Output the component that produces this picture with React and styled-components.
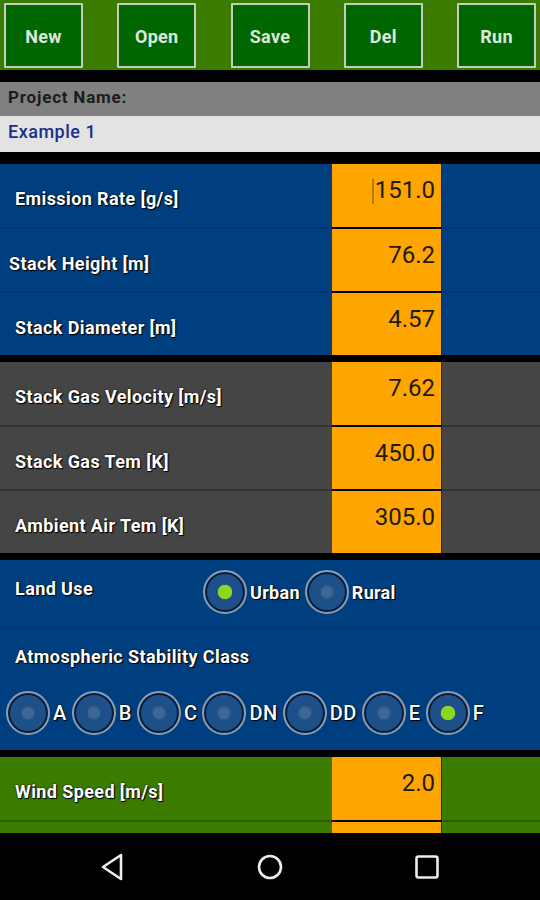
import React from "react";
import styled, { createGlobalStyle, css } from "styled-components";

const Global = createGlobalStyle`
  html, body { margin: 0; padding: 0; background: #000; }
  body { font-family: Roboto, "Noto Sans", sans-serif; }
  * { box-sizing: border-box; }
`;

const Screen = styled.div`
  width: 540px;
  height: 900px;
  display: flex;
  flex-direction: column;
  background: #000;
  overflow: hidden;
`;

const Content = styled.div`
  flex: 1;
  overflow: hidden;
  display: flex;
  flex-direction: column;
  & > * {
    flex-shrink: 0;
  }
`;

const Toolbar = styled.div`
  height: 70px;
  background: #3a7b00;
  display: flex;
  justify-content: space-between;
  align-items: flex-start;
  padding: 3px 4px 0 4px;
`;

const ToolButton = styled.button`
  width: 79px;
  height: 65px;
  background: #006600;
  border: 2px solid #c4cbc0;
  border-radius: 1px;
  color: #dfe6dc;
  font-family: Roboto, sans-serif;
  font-weight: 700;
  font-size: 18px;
  letter-spacing: 0.3px;
  padding: 0;
  padding-top: 1px;
`;

const Band = styled.div`
  margin-top: ${(p) => p.$gap || 0}px;
  height: ${(p) => p.$h}px;
  background: ${(p) => p.$bg};
  color: ${(p) => p.$color};
  font-size: ${(p) => p.$size || 16}px;
  font-weight: ${(p) => p.$weight || 700};
  letter-spacing: ${(p) => p.$ls || 0}px;
  display: flex;
  align-items: center;
  padding: 0 8px;
  padding-bottom: ${(p) => p.$pb || 0}px;
`;

const Section = styled.div`
  margin-top: ${(p) => p.$gap || 0}px;
  background: ${(p) => p.$bg};
  display: flex;
  flex-direction: column;
  flex-shrink: 0;
`;

const Label = styled.div`
  display: flex;
  align-items: center;
  padding-left: ${(p) => p.$indent ?? 15}px;
  padding-top: 6px;
  color: #fff;
  font-weight: 700;
  font-size: 18px;
  letter-spacing: 0.4px;
  text-shadow: 0 0 2px #000, 1px 1px 1px #000;
  white-space: nowrap;
`;

const Value = styled.div`
  background: #ffa500;
  color: #1e1a10;
  font-size: 24px;
  font-weight: 400;
  text-align: right;
  padding: 12px 6px 0 0;
  line-height: 28px;
  border-right: 1px solid #3a2a00;
`;

const Filler = styled.div``;

const Row = styled.div`
  display: grid;
  grid-template-columns: 332px 110px 1fr;
  height: 63px;
  flex-shrink: 0;
  & + & {
    height: 64px;
  }
  & + & > * {
    border-top: 2px solid ${(p) => p.$line};
  }
  & + & > ${Value} {
    border-top-color: #000;
  }
`;

const Cursor = styled.span`
  display: inline-block;
  width: 2px;
  height: 25px;
  vertical-align: -6px;
  background: #b57d00;
  margin-right: 1px;
`;

const RadioBlock = styled.div`
  height: ${(p) => p.$h}px;
  flex-shrink: 0;
  display: ${(p) => (p.$stack ? "block" : "flex")};
  align-items: flex-start;
  & + & {
    border-top: 1px solid #023366;
  }
`;

const BlockTitle = styled.div`
  color: #fff;
  font-weight: 700;
  font-size: 18px;
  letter-spacing: 0.4px;
  text-shadow: 0 0 2px #000, 1px 1px 1px #000;
  padding: ${(p) => p.$pad};
  width: ${(p) => (p.$w ? p.$w + "px" : "auto")};
  flex-shrink: 0;
  white-space: nowrap;
`;

const RadioGroup = styled.div`
  display: flex;
  align-items: center;
  padding: ${(p) => p.$pad};
`;

const RadioItem = styled.label`
  display: flex;
  align-items: center;
  margin-right: ${(p) => p.$after}px;
  color: #fff;
  font-size: ${(p) => p.$size}px;
  font-weight: ${(p) => p.$weight};
  letter-spacing: ${(p) => p.$ls}px;
  text-shadow: 0 0 2px #000, 1px 1px 1px #000;
`;

const RadioCircle = styled.span`
  width: 44px;
  height: 44px;
  border-radius: 50%;
  border: 2px solid #8c9db3;
  box-shadow: inset 0 0 0 2px #0b1d38;
  margin-right: 3px;
  flex-shrink: 0;
  display: flex;
  align-items: center;
  justify-content: center;
  background: #1d4f88;
  &::after {
    content: "";
    width: ${(p) => (p.$on ? 14 : 12)}px;
    height: ${(p) => (p.$on ? 14 : 12)}px;
    border-radius: 50%;
    ${(p) =>
      p.$on
        ? css`
            background: #8fd61e;
            box-shadow: 0 0 1px #b8f060;
          `
        : css`
            background: #3f6794;
            box-shadow: 0 0 3px #3f6794;
          `}
  }
`;

const NavBar = styled.div`
  height: 67px;
  background: #000;
  display: flex;
  align-items: center;
  justify-content: center;
  gap: 127px;
  flex-shrink: 0;
`;

const NavIcon = styled.svg`
  width: 30px;
  height: 30px;
  color: #ececec;
`;

const Radio = ({ label, on, weight = 500, after = 5, size = 20, ls = 0.3 }) => (
  <RadioItem $weight={weight} $after={after} $size={size} $ls={ls}>
    <RadioCircle $on={on} />
    {label}
  </RadioItem>
);

const DataSection = ({ bg, line, gap, rows }) => (
  <Section $bg={bg} $gap={gap}>
    {rows.map((r, i) => (
      <Row key={i} $line={line}>
        <Label $indent={r.indent}>{r.label}</Label>
        <Value>
          {r.cursor && <Cursor />}
          {r.value}
        </Value>
        <Filler />
      </Row>
    ))}
  </Section>
);

const stability = ["A", "B", "C", "DN", "DD", "E", "F"];

export default function App() {
  return (
    <>
      <Global />
      <Screen>
        <Content>
          <Toolbar>
            {["New", "Open", "Save", "Del", "Run"].map((t) => (
              <ToolButton key={t}>{t}</ToolButton>
            ))}
          </Toolbar>
          <Band $gap={12} $h={34} $bg="#808080" $color="#1c1c1c" $size={17} $ls={0.8} $pb={4}>
            Project Name:
          </Band>
          <Band $h={36} $bg="#e3e3e3" $color="#1b2f8c" $size={18} $ls={0.5} $weight={500} $pb={6}>
            Example 1
          </Band>
          <DataSection
            gap={12}
            bg="#003f7f"
            line="#033670"
            rows={[
              { label: "Emission Rate [g/s]", value: "151.0", cursor: true },
              { label: "Stack Height [m]", value: "76.2", indent: 9 },
              { label: "Stack Diameter [m]", value: "4.57" },
            ]}
          />
          <DataSection
            gap={7}
            bg="#454545"
            line="#343434"
            rows={[
              { label: "Stack Gas Velocity [m/s]", value: "7.62" },
              { label: "Stack Gas Tem [K]", value: "450.0" },
              { label: "Ambient Air Tem [K]", value: "305.0" },
            ]}
          />
          <Section $gap={7} $bg="#003f7f">
            <RadioBlock $h={67}>
              <BlockTitle $pad="18px 0 0 15px" $w={203}>
                Land Use
              </BlockTitle>
              <RadioGroup $pad="10px 0 0 0">
                <Radio label="Urban" on weight={700} size={18} after={5} />
                <Radio label="Rural" weight={700} size={18} />
              </RadioGroup>
            </RadioBlock>
            <RadioBlock $h={123} $stack>
              <BlockTitle $pad="18px 0 0 15px">Atmospheric Stability Class</BlockTitle>
              <RadioGroup $pad="24px 0 0 6px">
                {stability.map((s) => (
                  <Radio key={s} label={s} on={s === "F"} ls={0.5} />
                ))}
              </RadioGroup>
            </RadioBlock>
          </Section>
          <DataSection
            gap={7}
            bg="#3a7b00"
            line="#2c5e00"
            rows={[
              { label: "Wind Speed [m/s]", value: "2.0" },
              { label: "", value: "" },
            ]}
          />
        </Content>
        <NavBar>
          <NavIcon viewBox="0 0 30 30" fill="none" stroke="currentColor" strokeWidth="2.6" strokeLinejoin="round">
            <path d="M23 3 L5 15 L23 27 Z" />
          </NavIcon>
          <NavIcon viewBox="0 0 30 30" fill="none" stroke="currentColor" strokeWidth="2.6">
            <circle cx="15" cy="15" r="11" />
          </NavIcon>
          <NavIcon viewBox="0 0 30 30" fill="none" stroke="currentColor" strokeWidth="2.6">
            <rect x="4.5" y="4.5" width="21" height="21" rx="2" />
          </NavIcon>
        </NavBar>
      </Screen>
    </>
  );
}
